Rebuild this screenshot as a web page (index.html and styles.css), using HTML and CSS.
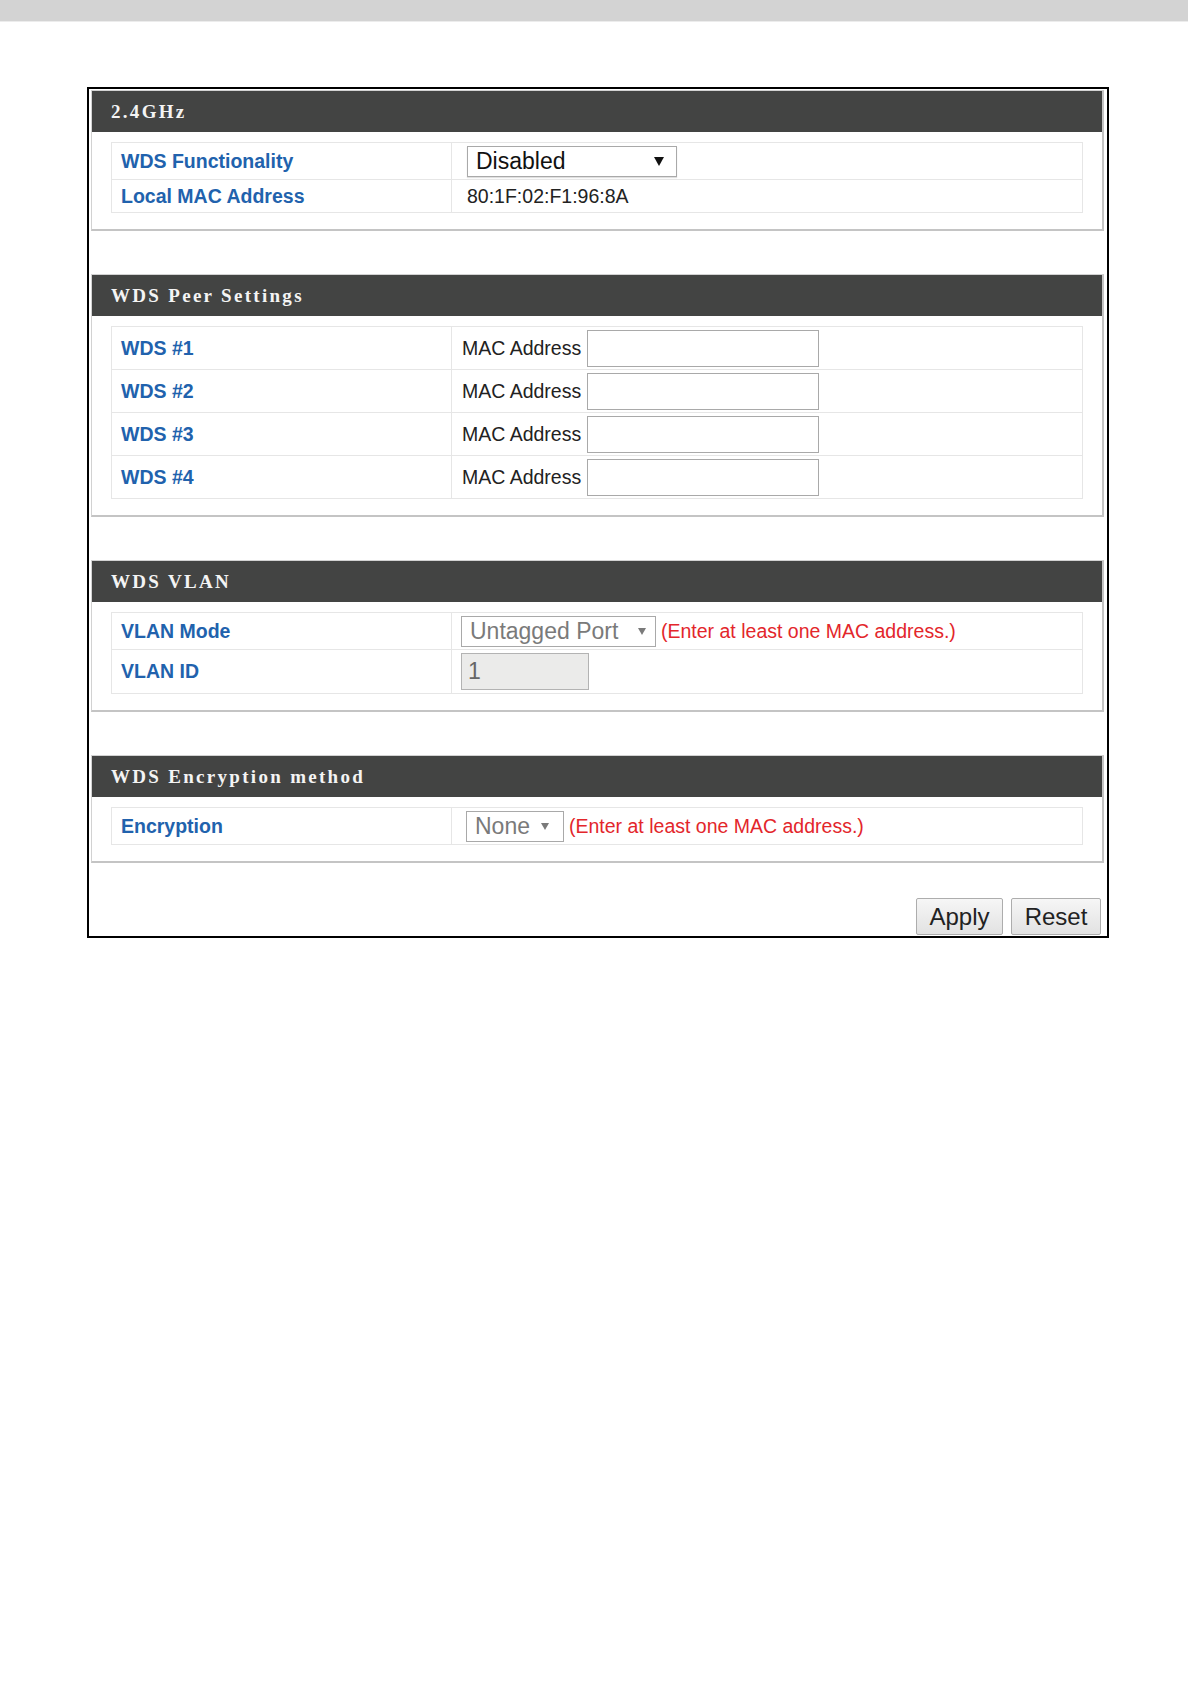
FILE: index.html
```html
<!DOCTYPE html>
<html>
<head>
<meta charset="utf-8">
<title>WDS</title>
<link rel="stylesheet" href="styles.css">
</head>
<body>
<div class="topbar"></div>
<div class="frame">

  <section class="panel">
    <div class="panel-head">2.4GHz</div>
    <div class="panel-body">
      <div class="grid">
        <div class="row h36">
          <div class="lbl">WDS Functionality</div>
          <div class="val p15">
            <div class="select sel-dis">
              <span>Disabled</span>
              <svg class="arr-big" width="10" height="9" viewBox="0 0 10 9"><polygon points="0,0 10,0 5,9" fill="#111"/></svg>
            </div>
          </div>
        </div>
        <div class="row h32">
          <div class="lbl">Local MAC Address</div>
          <div class="val p15 txt">80:1F:02:F1:96:8A</div>
        </div>
      </div>
    </div>
  </section>

  <section class="panel">
    <div class="panel-head">WDS Peer Settings</div>
    <div class="panel-body">
      <div class="grid">
        <div class="row h42">
          <div class="lbl">WDS #1</div>
          <div class="val p10 txt"><span>MAC Address</span><span class="mac-input"></span></div>
        </div>
        <div class="row h42">
          <div class="lbl">WDS #2</div>
          <div class="val p10 txt"><span>MAC Address</span><span class="mac-input"></span></div>
        </div>
        <div class="row h42">
          <div class="lbl">WDS #3</div>
          <div class="val p10 txt"><span>MAC Address</span><span class="mac-input"></span></div>
        </div>
        <div class="row h42">
          <div class="lbl">WDS #4</div>
          <div class="val p10 txt"><span>MAC Address</span><span class="mac-input"></span></div>
        </div>
      </div>
    </div>
  </section>

  <section class="panel">
    <div class="panel-head">WDS VLAN</div>
    <div class="panel-body">
      <div class="grid">
        <div class="row h36">
          <div class="lbl">VLAN Mode</div>
          <div class="val p9">
            <div class="select sel-vlan dim">
              <span>Untagged Port</span>
              <svg class="arr-small" width="8" height="7" viewBox="0 0 8 7"><polygon points="0,0 8,0 4,7" fill="#7a7a7a"/></svg>
            </div>
            <span class="note">(Enter at least one MAC address.)</span>
          </div>
        </div>
        <div class="row h43">
          <div class="lbl">VLAN ID</div>
          <div class="val p9">
            <div class="vlan-id">1</div>
          </div>
        </div>
      </div>
    </div>
  </section>

  <section class="panel">
    <div class="panel-head">WDS Encryption method</div>
    <div class="panel-body">
      <div class="grid">
        <div class="row h36">
          <div class="lbl">Encryption</div>
          <div class="val p14">
            <div class="select sel-none dim">
              <span>None</span>
              <svg class="arr-small" width="8" height="7" viewBox="0 0 8 7"><polygon points="0,0 8,0 4,7" fill="#7a7a7a"/></svg>
            </div>
            <span class="note">(Enter at least one MAC address.)</span>
          </div>
        </div>
      </div>
    </div>
  </section>

  <div class="actions">
    <button class="btn btn-apply">Apply</button>
    <button class="btn btn-reset">Reset</button>
  </div>
</div>
</body>
</html>
```

FILE: styles.css
```css
html, body {
  margin: 0;
  padding: 0;
  background: #ffffff;
}

body {
  width: 1191px;
  font-family: "Liberation Sans", Arial, sans-serif;
  color: #222;
}

.topbar {
  width: 1188px;
  height: 21px;
  background: #d3d3d3;
  border-bottom: 1px solid #ececec;
}

.frame {
  box-sizing: border-box;
  width: 1022px;
  margin: 65px 0 0 87px;
  border: 2px solid #000;
  padding: 1px 3px 1px 2px;
}

.panel {
  border: 1px solid #d2d2d2;
  border-right: 2px solid #c4c4c4;
  border-bottom: 2px solid #c4c4c4;
  background: #fff;
}

.panel + .panel {
  margin-top: 43px;
}

.panel-head {
  height: 41px;
  background: #434443;
  color: #f4f4f4;
  font-family: "Liberation Serif", "Times New Roman", serif;
  font-weight: bold;
  font-size: 19px;
  letter-spacing: 2.3px;
  display: flex;
  align-items: center;
  padding-left: 19px;
}

.panel-body {
  padding: 10px 19px 16px 19px;
}

.grid {
  border: 1px solid #e6e6e6;
}

.row {
  display: flex;
}

.row + .row {
  border-top: 1px solid #e6e6e6;
}

.h32 { height: 32px; }
.h36 { height: 36px; }
.h42 { height: 42px; }
.h43 { height: 43px; }

.lbl {
  box-sizing: border-box;
  width: 340px;
  border-right: 1px solid #e6e6e6;
  display: flex;
  align-items: center;
  padding-left: 9px;
  color: #2162ad;
  font-weight: bold;
  font-size: 19.5px;
}

.val {
  flex: 1;
  display: flex;
  align-items: center;
  font-size: 19.5px;
}

.p9 { padding-left: 9px; }
.p10 { padding-left: 10px; }
.p14 { padding-left: 14px; }
.p15 { padding-left: 15px; }

.txt {
  color: #222;
  gap: 6px;
}

.select {
  box-sizing: border-box;
  height: 31px;
  border: 1px solid #a9a9a9;
  background: #fff;
  display: flex;
  align-items: center;
  justify-content: space-between;
  font-size: 23px;
  padding-left: 8px;
}

.sel-dis {
  width: 210px;
  padding-right: 12px;
  color: #111;
  box-shadow: 0 1px 1px rgba(0, 0, 0, 0.12);
}

.sel-vlan {
  width: 195px;
  padding-right: 9px;
}

.sel-none {
  width: 98px;
  padding-right: 14px;
}

.dim {
  color: #7a7a7a;
}

.note {
  margin-left: 5px;
  color: #e3262b;
  font-size: 19.5px;
}

.mac-input {
  box-sizing: border-box;
  width: 232px;
  height: 37px;
  border: 1px solid #a9a9a9;
  background: #fff;
}

.vlan-id {
  box-sizing: border-box;
  width: 128px;
  height: 37px;
  border: 1px solid #b3b3b3;
  background: #ebebea;
  color: #666;
  font-size: 23px;
  display: flex;
  align-items: center;
  padding-left: 6px;
}

.actions {
  display: flex;
  justify-content: flex-end;
  gap: 8px;
  margin-top: 35px;
  padding-right: 3px;
}

.btn {
  box-sizing: border-box;
  height: 37px;
  border: 1px solid #adadad;
  border-radius: 2px;
  background: linear-gradient(#f6f6f6, #e2e2e2);
  font-family: "Liberation Sans", Arial, sans-serif;
  font-size: 24px;
  color: #222;
  padding: 0;
}

.btn-apply { width: 87px; }
.btn-reset { width: 90px; }
```
